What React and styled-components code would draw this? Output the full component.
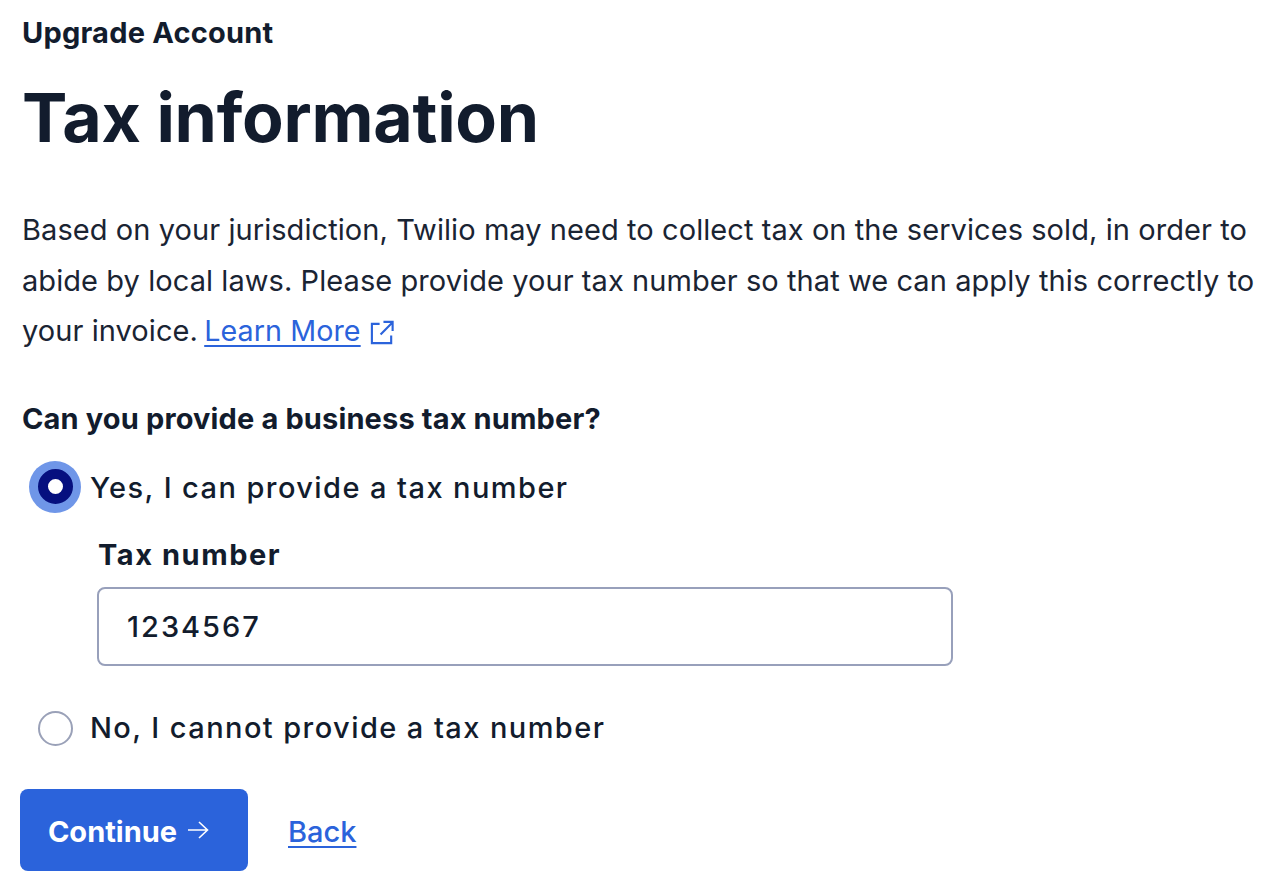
import React from "react";
import styled, { createGlobalStyle } from "styled-components";

const Global = createGlobalStyle`
  html, body { margin: 0; padding: 0; background: #fff; }
  body { font-family: Inter, "Noto Sans", sans-serif; color: #121c2d; }
`;

const Page = styled.main`
  width: 1284px;
  height: 896px;
  overflow: hidden;
  box-sizing: border-box;
  padding: 14px 0 0 22px;
  display: flex;
  flex-direction: column;
`;

const Eyebrow = styled.div`
  font-size: 29px;
  line-height: 38px;
  font-weight: 700;
  letter-spacing: 0.22px;
`;

const Title = styled.h1`
  margin: 21px 0 0;
  font-size: 68px;
  line-height: 88px;
  font-weight: 700;
  letter-spacing: -0.25px;
`;

const Intro = styled.p`
  margin: 44px 0 0;
  width: 1250px;
  font-size: 29px;
  line-height: 50.5px;
  font-weight: 400;
  letter-spacing: 0.07px;
  color: #1a2433;
`;

const TextLink = styled.a`
  color: #2b63db;
  font-size: 28.7px;
  margin-left: ${(p) => p.$shift || 0}px;
  text-decoration: underline;
  text-decoration-thickness: 2px;
  text-underline-offset: 4px;
`;

const BackLink = styled(TextLink)`
  padding-top: 4px;
  font-size: 29px;
  font-weight: 500;
`;

const ExternalIcon = styled.svg`
  width: 27px;
  height: 27px;
  margin-left: 8px;
  vertical-align: -5px;
  color: #2b63db;
`;

const Fieldset = styled.fieldset`
  border: 0;
  margin: 43px 0 0;
  padding: 0;
`;

const Legend = styled.div`
  font-size: 29px;
  line-height: 38px;
  font-weight: 700;
  letter-spacing: 0.14px;
`;

const RadioRow = styled.label`
  display: flex;
  align-items: center;
  gap: 10px;
  height: 52px;
  margin-top: ${(p) => p.$top}px;
  padding-left: 7px;
  font-size: 29px;
  font-weight: 500;
  letter-spacing: 1.42px;
`;

const RadioText = styled.span`
  padding-top: ${(p) => p.$down || 0}px;
  padding-bottom: ${(p) => p.$up || 0}px;
`;

const RadioDot = styled.span`
  box-sizing: border-box;
  width: 52px;
  height: 52px;
  margin-right: -1px;
  flex: none;
  display: flex;
  align-items: center;
  justify-content: center;
  border-radius: 50%;
  background: ${(p) => (p.$checked ? "#6f96e8" : "transparent")};
`;

const RadioInner = styled.span`
  box-sizing: border-box;
  width: 35px;
  height: 35px;
  border-radius: 50%;
  border: ${(p) => (p.$checked ? "10px solid #06107f" : "2.5px solid #9aa1b8")};
  background: #fff;
`;

const Nested = styled.div`
  margin: 23px 0 0 75px;
`;

const FieldLabel = styled.div`
  font-size: 29px;
  line-height: 38px;
  font-weight: 700;
  letter-spacing: 1.55px;
  padding-left: 1px;
`;

const TaxInput = styled.div`
  box-sizing: border-box;
  width: 856px;
  height: 79px;
  margin-top: 13px;
  padding-left: 28px;
  display: flex;
  align-items: center;
  border: 2px solid #98a0bb;
  border-radius: 8px;
  font-size: 29px;
  font-weight: 500;
  letter-spacing: 2px;
`;

const Actions = styled.div`
  display: flex;
  align-items: center;
  gap: 40px;
  margin: 34px 0 0 -2px;
`;

const PrimaryButton = styled.button`
  width: 228px;
  height: 82px;
  padding: 3px 10px 0 0;
  border: 0;
  border-radius: 8px;
  background: #2b63db;
  color: #fff;
  font: 700 29px Inter, sans-serif;
  display: flex;
  align-items: center;
  justify-content: center;
  gap: 9px;
`;

const ArrowIcon = styled.svg`
  width: 24px;
  height: 24px;
  margin-bottom: 2px;
`;

export default function App() {
  return (
    <>
      <Global />
      <Page>
        <Eyebrow>Upgrade Account</Eyebrow>
        <Title>Tax information</Title>
        <Intro>
          Based on your jurisdiction, Twilio may need to collect tax on the services sold, in order to abide by local
          laws. Please provide your tax number so that we can apply this correctly to your invoice.{" "}
          <TextLink href="#" $shift={-2}>Learn More</TextLink>
          <ExternalIcon viewBox="0 0 28 28" fill="none" stroke="currentColor" strokeWidth="2.2">
            <path d="M11 5H3v20h20v-8" />
            <path d="M12 16 24 4M15 3h9.500v9.500" />
          </ExternalIcon>
        </Intro>
        <Fieldset>
          <Legend>Can you provide a business tax number?</Legend>
          <RadioRow $top={23}>
            <RadioDot $checked>
              <RadioInner $checked />
            </RadioDot>
            <RadioText $down={2}>Yes, I can provide a tax number</RadioText>
          </RadioRow>
          <Nested>
            <FieldLabel>Tax number</FieldLabel>
            <TaxInput>1234567</TaxInput>
          </Nested>
          <RadioRow $top={37}>
            <RadioDot>
              <RadioInner />
            </RadioDot>
            <RadioText $up={2}>No, I cannot provide a tax number</RadioText>
          </RadioRow>
        </Fieldset>
        <Actions>
          <PrimaryButton>
            Continue
            <ArrowIcon viewBox="0 0 24 24" fill="none" stroke="currentColor" strokeWidth="1.6">
              <path d="M2 12h20M13 4l8.500 8-8.500 8" />
            </ArrowIcon>
          </PrimaryButton>
          <BackLink href="#">Back</BackLink>
        </Actions>
      </Page>
    </>
  );
}
